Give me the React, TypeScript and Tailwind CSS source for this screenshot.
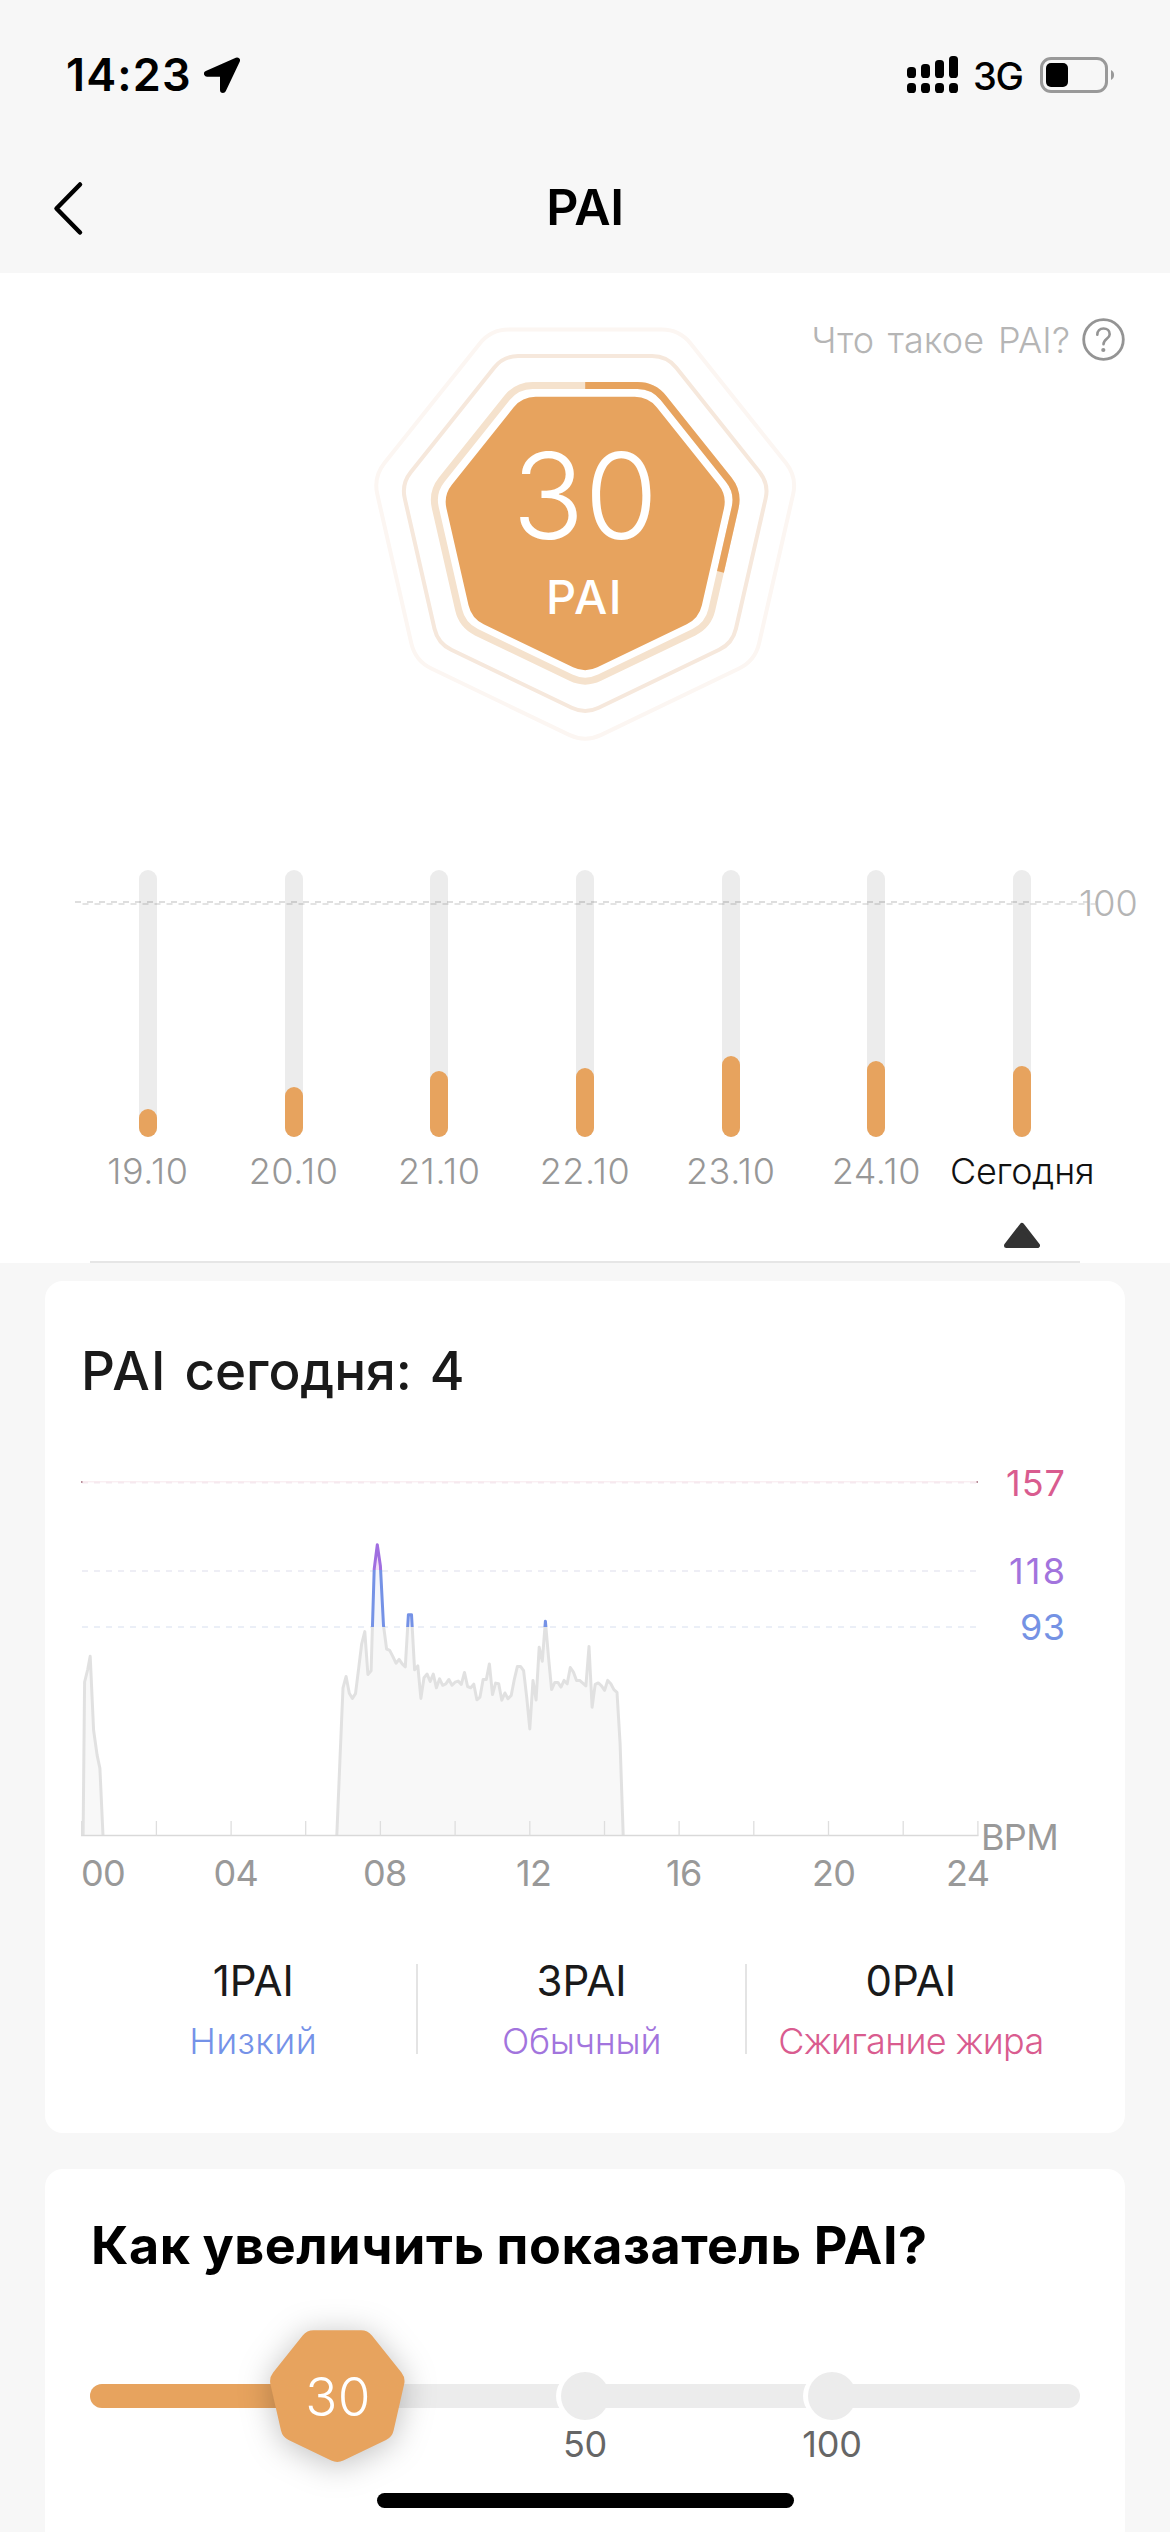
const ORANGE = "#e7a35e";

/** Downward-pointing heptagon with rounded corners, drawn clockwise from the middle of its top edge. */
function heptagon(cx: number, cy: number, radius: number, corner: number): string {
  const step = (2 * Math.PI) / 7;
  const cut = corner * Math.tan(step / 2);
  const pts = Array.from({ length: 7 }, (_, i) => {
    const a = step / 2 + i * step;
    return [cx + radius * Math.sin(a), cy - radius * Math.cos(a)];
  });
  const side = Math.hypot(pts[1][0] - pts[0][0], pts[1][1] - pts[0][1]);
  const towards = (p: number[], q: number[]) => [
    p[0] + ((q[0] - p[0]) * cut) / side,
    p[1] + ((q[1] - p[1]) * cut) / side,
  ];
  const f = (p: number[]) => `${p[0].toFixed(2)} ${p[1].toFixed(2)}`;
  let d = `M${cx} ${(cy - radius * Math.cos(step / 2)).toFixed(2)}`;
  pts.forEach((p, i) => {
    const prev = pts[(i + 6) % 7];
    const next = pts[(i + 1) % 7];
    d += `L${f(towards(p, prev))}A${corner} ${corner} 0 0 1 ${f(towards(p, next))}`;
  });
  return d + "Z";
}

function StatusBar() {
  return (
    <div className="flex h-[149px] items-center justify-between pr-[55px] pl-[66px]">
      <div className="flex items-center">
        <span className="w-[138px] text-[45px] leading-[48px] font-semibold tracking-[1.15px] text-black">14:23</span>
        <svg className="h-9 w-9" viewBox="204 57 36 36">
          <path d="M237 60.5L207 73.7H223V90Z" fill="#000" stroke="#000" strokeWidth="6" strokeLinejoin="round" />
        </svg>
      </div>
      <div className="flex items-center">
        <svg className="h-[37px] w-[51px]" viewBox="0 0 51 37">
          {[11, 8, 4, 0].map((top, i) => (
            <g key={i}>
              <rect x={i * 14} y={top} width="9" height={22 - top} rx="3.6" />
              <rect x={i * 14} y="27" width="9" height="10" rx="3.6" />
            </g>
          ))}
        </svg>
        <span className="relative top-px ml-[15px] w-[67px] text-[38px] leading-[44px] font-medium tracking-[-1.4px] text-black">3G</span>
        <svg className="h-9 w-[75px]" viewBox="0 0 75 36">
          <rect x="1.5" y="1.5" width="65" height="33" rx="9.5" fill="none" stroke="#999" strokeWidth="3" />
          <rect x="6" y="6" width="22" height="24" rx="5" />
          <path d="M71 13a5.6 5.6 0 0 1 0 10Z" fill="#999" />
        </svg>
      </div>
    </div>
  );
}

function Header() {
  return (
    <header className="h-[273px] bg-[#f7f7f7]">
      <StatusBar />
      <div className="relative flex h-[116px] items-center justify-center">
        <svg className="absolute top-[31px] left-[52px] h-[56px] w-[32px]" viewBox="0 0 32 56">
          <path d="M28 4.500L4.500 28.500L28 52.500" fill="none" stroke="#000" strokeWidth="4.500" strokeLinecap="round" strokeLinejoin="round" />
        </svg>
        <h1 className="text-[50px] leading-[60px] font-semibold tracking-[-0.4px] text-black">PAI</h1>
      </div>
    </header>
  );
}

function PaiBadge() {
  const ring = heptagon(225.2, 217.2, 157.4, 33);
  return (
    <svg className="-mt-[59px] h-[450px] w-[450px] self-center" viewBox="0 0 450 450" fill="none">
      <path d={heptagon(225.2, 215.3, 217.3, 37)} stroke="#fcf6f2" strokeWidth="4" />
      <path d={heptagon(225.2, 215.8, 188.5, 31)} stroke="#f6e8dc" strokeWidth="4" />
      <path d={ring} stroke="#f5e2cd" strokeWidth="7" />
      <path d={ring} stroke={ORANGE} strokeWidth="7" pathLength={100} strokeDasharray="30 70" />
      <path d={heptagon(225.2, 217.7, 145.4, 28)} fill={ORANGE} />
      <text x="152.300" y="229" fill="#fff" fontSize="119" fontWeight="330" letterSpacing="0">30</text>
      <text x="186" y="304" fill="#fff" fontSize="47" fontWeight="500" letterSpacing="1.4">PAI</text>
    </svg>
  );
}

const week = [
  { label: "19.10", height: 28.5 },
  { label: "20.10", height: 50 },
  { label: "21.10", height: 66.5 },
  { label: "22.10", height: 69 },
  { label: "23.10", height: 81 },
  { label: "24.10", height: 76 },
  { label: "Сегодня", height: 71, today: true },
];

function WeekChart() {
  return (
    <div className="relative mt-[110px] pl-[75px]">
      <div className="grid w-[1020px] grid-cols-7">
        {week.map((d) => (
          <div key={d.label} className="flex flex-col items-center">
            <div className="flex h-[267px] w-[18px] flex-col justify-end rounded-full bg-[#ececec]">
              <div className="rounded-full bg-[#e7a35e]" style={{ height: d.height }} />
            </div>
            {d.today ? (
              <>
                <span className="mt-4 text-[36px] leading-9 font-[340] tracking-[-0.2px] whitespace-nowrap text-[#111]">{d.label}</span>
                <svg className="mt-[33px] h-[27px] w-9" viewBox="0 0 36 27">
                  <path d="M18 3.500L33.500 23.500H2.500Z" fill="#333" stroke="#333" strokeWidth="5" strokeLinejoin="round" />
                </svg>
              </>
            ) : (
              <span className="mt-4 text-[36px] leading-9 font-[340] tracking-[0.6px] text-[#979797]">{d.label}</span>
            )}
          </div>
        ))}
      </div>
      <svg className="absolute top-[29px] left-[75px] h-2 w-[1021px]" viewBox="0 0 1021 8" fill="none">
        <path d="M0 3H1021" stroke="#000" strokeOpacity="0.130" strokeWidth="2" strokeDasharray="6 6" />
        <path d="M7.500 5H1021" stroke="#000" strokeOpacity="0.110" strokeWidth="2" strokeDasharray="6 6" />
      </svg>
      <span className="absolute top-[15px] left-[1079px] text-[36px] leading-9 font-[340] text-[#b5b5b5]">100</span>
    </div>
  );
}

function Hero() {
  return (
    <section className="flex h-[990px] flex-col bg-white">
      <div className="mt-[37px] flex h-[59px] items-center justify-end pr-[45px]">
        <span className="text-[36px] font-[340] tracking-[0.1px] [word-spacing:3.500px] text-[#b5b5b5]">Что такое PAI?</span>
        <svg className="ml-3 h-[43px] w-[43px]" viewBox="0 0 43 43" fill="none">
          <circle cx="21.500" cy="21.500" r="19.800" stroke="#949494" strokeWidth="2.800" />
          <path d="M15.300 16.800C15.300 12.800 17.900 10.500 21.500 10.500S27.700 12.800 27.700 16.200C27.700 20.800 21.500 20.800 21.500 26.300" stroke="#949494" strokeWidth="2.600" strokeLinecap="round" />
          <circle cx="21.300" cy="32" r="2.100" fill="#949494" />
        </svg>
      </div>
      <PaiBadge />
      <WeekChart />
      <div className="mx-[90px] mt-auto h-0.5 bg-[#e6e6e6]" />
    </section>
  );
}

/** Heart-rate readings: [five-minute slot of the day, beats per minute]. */
const morning: [number, number][] = [
  [0.5, 0], [1, 68], [2, 73.5], [2.8, 79.4], [3.9, 46.6], [5, 35.6], [5.9, 29.7], [6.9, 0],
];
const dayValues = [
  0, 33, 65.4, 70.4, 63, 60.7, 62.8, 73.8, 84.9, 90.3, 71.3, 73, 118, 128.8, 119.4, 93, 82.6, 82, 79.2, 76.3, 78, 76, 74.7,
  97.8, 97.8, 73.4, 75.1, 60.7, 69.9, 71.5, 68.2, 71.5, 65.4, 69.4, 66.5, 67.2, 69.1, 66.5, 67.9, 68.4, 66.9, 72.2, 66,
  65.4, 67, 60.1, 61.3, 69.1, 69.1, 76, 62.4, 67.5, 67.2, 59.9, 63.1, 60.6, 62, 69.1, 74.9, 74.9, 73, 61.3, 47.2, 68.7,
  60, 83.4, 77.2, 94.9, 79, 64.6, 67.8, 67.8, 65.7, 68.7, 67.2, 74.4, 72.4, 68.7, 68.7, 67.5, 66.3, 83.7, 56.8, 66.9,
  67.6, 66.3, 64.3, 68.7, 67.2, 64.6, 63.4, 40.7, 0,
];
const day = dayValues.map((v, i): [number, number] => [82 + i, v]);

const BASE = 375.5;
const bpmY = (v: number) => BASE - v * 2.258;
const toPath = (pts: [number, number][]) =>
  "M" + pts.map(([t, v]) => `${(t * 3.1135 + 0.5).toFixed(1)} ${bpmY(v).toFixed(1)}`).join("L");

const limits = [
  { value: "157", y: 22.5, color: "#d95c8f", grid: "#f6eaef", spacing: 1 },
  { value: "118", y: 111, color: "#a274dd", grid: "#eeeef5", spacing: 2.2 },
  { value: "93", y: 167, color: "#7592e4", grid: "#ebeff7", spacing: 0.4 },
];
const hours: [string, number][] = [
  ["00", 0], ["04", 132.5], ["08", 282], ["12", 435], ["16", 585], ["20", 731], ["24", 865],
];

function HeartChart() {
  return (
    <svg className="ml-9 h-[440px] w-[1000px]" viewBox="0 0 1000 440" fill="none" fontSize="36">
      <defs>
        <linearGradient id="line" gradientUnits="userSpaceOnUse" x1="0" y1="0" x2="0" y2={BASE}>
          <stop offset={110 / BASE} stopColor="#a06ee0" />
          <stop offset={110 / BASE} stopColor="#7592e6" />
          <stop offset={166.5 / BASE} stopColor="#7592e6" />
          <stop offset={166.5 / BASE} stopColor="#e1e1e1" />
        </linearGradient>
        <linearGradient id="area" gradientUnits="userSpaceOnUse" x1="0" y1="0" x2="0" y2={BASE}>
          <stop offset={110 / BASE} stopColor="#f3dcf7" />
          <stop offset={110 / BASE} stopColor="#f3f5fb" />
          <stop offset={166.5 / BASE} stopColor="#f3f5fb" />
          <stop offset={166.5 / BASE} stopColor="#f8f8f8" />
        </linearGradient>
      </defs>
      {limits.map((l) => (
        <path key={l.value} d={`M1 ${l.y}H897`} stroke={l.grid} strokeWidth="2" strokeDasharray="6 6" />
      ))}
      <path d="M1 21.800H897" stroke="#f8e8ed" strokeWidth="1" />
      <path d="M0 22H1.500M895.500 22H897" stroke="#a06a78" strokeWidth="1.500" />
      <path d={toPath(morning)} fill="url(#area)" stroke="url(#line)" strokeWidth="3" strokeLinejoin="round" />
      <path d={toPath(day)} fill="url(#area)" stroke="url(#line)" strokeWidth="3" strokeLinejoin="round" />
      <path d={`M0 ${BASE}H897.500`} stroke="#d9d9d9" strokeWidth="1.700" />
      {Array.from({ length: 13 }, (_, i) => (
        <path key={i} d={`M${(0.7 + i * 74.68).toFixed(1)} 361V${BASE}`} stroke="#dedede" strokeWidth="1.300" />
      ))}
      {limits.map((l) => (
        <text key={l.value} x={984 + l.spacing} y={l.y + 13} fill={l.color} textAnchor="end" letterSpacing={l.spacing}>
          {l.value}
        </text>
      ))}
      <text x="900" y="390" fill="#999" letterSpacing="-0.700">BPM</text>
      {hours.map(([h, x]) => (
        <text key={h} x={x} y="426" fill="#999" letterSpacing="-0.600">{h}</text>
      ))}
    </svg>
  );
}

const zones = [
  { value: "1PAI", name: "Низкий", style: "text-[#7592e8] tracking-[0.3px]" },
  { value: "3PAI", name: "Обычный", style: "text-[#a274dd] tracking-[-0.3px]" },
  { value: "0PAI", name: "Сжигание жира", style: "text-[#d95c8f] tracking-[-0.7px]" },
];

function TodayCard() {
  return (
    <section className="mx-[45px] mt-[18px] h-[852px] rounded-[18px] bg-white pt-[60px]">
      <h2 className="pl-9 text-[53px] leading-[60px] font-medium tracking-[-0.1px] [word-spacing:4px] text-[#1a1a1a]">
        <span className="tracking-[1.2px]">PAI</span> сегодня: 4
      </h2>
      <div className="mt-[59px]">
        <HeartChart />
      </div>
      <div className="mt-16 ml-[45px] grid h-[90px] w-[985px] grid-cols-3 divide-x-2 divide-[#e4e4e4]">
        {zones.map((z) => (
          <div key={z.name} className="h-[90px] text-center whitespace-nowrap">
            <div className="text-[42px] leading-[34px] font-[380] text-[#1a1a1a]">{z.value}</div>
            <div className={`mt-[25px] text-[36px] leading-9 font-[340] ${z.style}`}>{z.name}</div>
          </div>
        ))}
      </div>
    </section>
  );
}

function Stop({ label, place }: { label: string; place: string }) {
  return (
    <div className={`absolute -top-3 flex w-12 flex-col items-center ${place}`}>
      <div className="h-12 w-12 rounded-full bg-[#ececec] shadow-[-5px_0_0_#fff]" />
      <span className="mt-[6px] text-[36px] leading-9 tracking-[-0.2px] text-[#666]">{label}</span>
    </div>
  );
}

function IncreaseCard() {
  return (
    <section className="mx-[45px] mt-9 h-[400px] rounded-t-[18px] bg-white px-[45px] pt-[47px]">
      <h2 className="pl-px text-[52px] leading-[60px] font-bold tracking-[0.55px] [word-spacing:-1px] whitespace-nowrap text-black">
        Как увеличить показатель PAI?
      </h2>
      <div className="relative mt-[108px] h-6 rounded-full bg-[#ececec]">
        <div className="h-6 w-[25%] rounded-full bg-[#e7a35e]" />
        <Stop label="50" place="left-[471px]" />
        <Stop label="100" place="left-[718px]" />
        <svg className="absolute -top-[84px] left-[147px] h-[200px] w-[200px] drop-shadow-[0_4px_16px_rgba(0,0,0,0.25)]" viewBox="0 0 200 200">
          <path d={heptagon(100.3, 93.3, 70.1, 14)} fill={ORANGE} />
          <text x="68.300" y="116" fill="#fff" fontSize="53" fontWeight="350" letterSpacing="0.300">30</text>
        </svg>
      </div>
    </section>
  );
}

export default function App() {
  return (
    <div className="relative h-[2532px] w-[1170px] overflow-hidden bg-[#f7f7f7] font-['Inter',sans-serif]">
      <Header />
      <Hero />
      <TodayCard />
      <IncreaseCard />
      <div className="absolute bottom-6 left-[377px] h-[15px] w-[417px] rounded-full bg-black" />
    </div>
  );
}
